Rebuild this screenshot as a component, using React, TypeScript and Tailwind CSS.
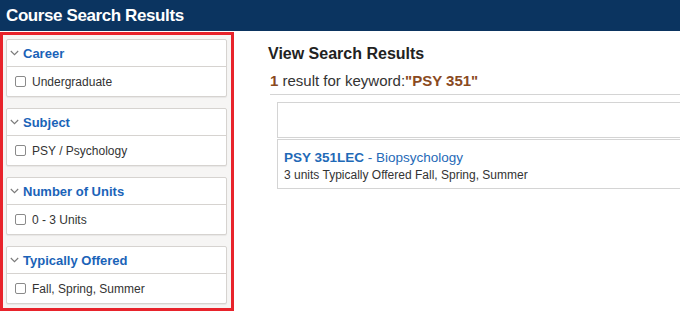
import React from "react";

const Chevron = () => (
  <svg width="9" height="6" viewBox="0 0 9 6" className="shrink-0">
    <path d="M0.8 1 L4.5 4.7 L8.2 1" fill="none" stroke="#7a7a7a" strokeWidth="1.1" />
  </svg>
);

const Card = ({ title, item }: { title: string; item: string }) => (
  <div className="bg-white border border-[#d6d3d0] rounded-[2px] shadow-[0_1px_1px_rgba(0,0,0,0.06)]">
    <div className="h-[27px] flex items-center pl-[3px] gap-[4px] border-b border-[#d6d3d0]">
      <Chevron />
      <span className="text-[13px] font-bold text-[#1a63b8] leading-none">{title}</span>
    </div>
    <div className="h-[29px] flex items-center pl-[8px] gap-[6px]">
      <span className="w-[11px] h-[11px] border border-[#8a8a8a] rounded-[2px] bg-white shrink-0" />
      <span className="text-[12px] text-[#333] leading-none">{item}</span>
    </div>
  </div>
);

export default function App() {
  return (
    <div
      className="w-[680px] h-[313px] bg-white overflow-hidden"
      style={{ fontFamily: '"Liberation Sans", Arial, sans-serif' }}
    >
      <div className="h-[31px] bg-[#0b3460] flex items-center pl-[6px] pb-[1px]">
        <span className="text-white font-bold text-[17px] leading-none tracking-[-0.4px]">Course Search Results</span>
      </div>
      <div className="flex">
        <div className="mt-[1px] w-[234px] h-[279px] border-[3px] border-[#e8232b] bg-[#f6f5f4] pt-[4px] pl-[3px] pr-[4px] flex flex-col gap-[11px]">
          <Card title="Career" item="Undergraduate" />
          <Card title="Subject" item="PSY / Psychology" />
          <Card title="Number of Units" item="0 - 3 Units" />
          <Card title="Typically Offered" item="Fall, Spring, Summer" />
        </div>
        <div className="flex-1 pl-[34px] pt-[15px]">
          <div className="text-[16px] font-bold text-[#222] leading-none h-[16px]">View Search Results</div>
          <div className="mt-[11px] pl-[2px] text-[15px] text-[#333] leading-none h-[16px]">
            <span className="font-bold text-[#8a4a1e]">1</span> result for keyword:
            <span className="font-bold text-[#8a4a1e]">"PSY 351"</span>
          </div>
          <div className="mt-[5px] ml-[2px] border-t border-[#d4d4d4]" />
          <div className="ml-[9px] mt-[7px] h-[36px] border-l border-t border-b border-[#d4d4d4]" />
          <div className="ml-[9px] mt-[1px] h-[50px] border-l border-t border-b border-[#d4d4d4] pl-[6px] pt-[11px]">
            <div className="text-[13.5px] leading-none">
              <span className="font-bold text-[#1f6ab7]">PSY 351LEC</span>
              <span className="text-[#1f6ab7]"> - Biopsychology</span>
            </div>
            <div className="mt-[4px] text-[12px] text-[#333] leading-none">3 units Typically Offered Fall, Spring, Summer</div>
          </div>
        </div>
      </div>
    </div>
  );
}
